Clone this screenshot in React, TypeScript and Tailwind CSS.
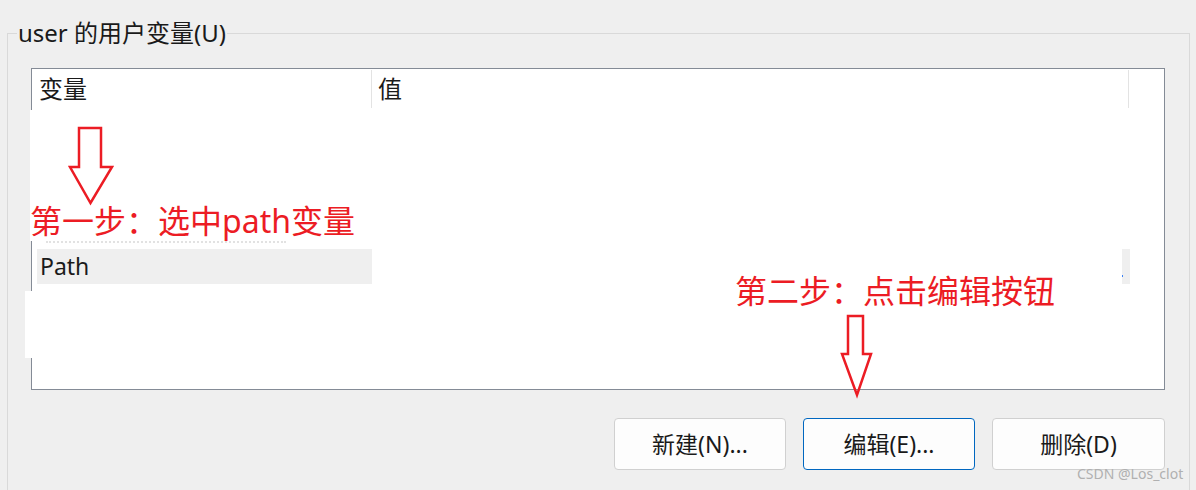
const uiFont = { fontFamily: '"Noto Sans", "Noto Sans CJK SC", sans-serif' }

function ArrowDown({ className, points }: { className: string; points: string }) {
  return (
    <svg className={className} fill="none">
      <polygon points={points} stroke="#ec1c24" strokeWidth={2.5} strokeLinejoin="miter" />
    </svg>
  )
}

export default function App() {
  return (
    <div className="relative w-[1196px] h-[490px] overflow-hidden bg-[#efefef] text-[#1a1a1a]" style={uiFont}>
      <fieldset className="mt-[19px] ml-[7px] mr-[6px] h-[520px] border border-[#d9d9d9]">
        <legend className="ml-[9px] px-[1px] text-[24px] leading-[28px]">user 的用户变量(U)</legend>

        <div className="relative ml-[23px] mt-[21px] w-[1134px] h-[322px] border border-[#848b96] bg-white">
          <div className="flex h-[40px] text-[24px]">
            <div className="w-[339px] pl-[7px] flex items-center">变量</div>
            <div className="w-px mt-[1px] h-[38px] bg-[#e3e3e3]" />
            <div className="flex-1 pl-[6px] flex items-center">值</div>
            <div className="w-px mt-[1px] h-[38px] bg-[#e3e3e3]" />
            <div className="w-[35px]" />
          </div>

          <div className="mt-[140px] flex h-[35px] text-[23px]">
            <div className="ml-[5px] w-[335px] bg-[#efefef] pl-[3px] flex items-center">Path</div>
            <div className="flex-1" />
            <div className="relative w-[8px] bg-[#efefef]">
              <div className="absolute left-0 top-[26px] w-px h-[2px] bg-[#3b82f6]" />
            </div>
            <div className="w-[34px]" />
          </div>

          {/* white patches from the pasted annotation */}
          <div className="absolute left-[-2px] top-[41px] w-[400px] h-[131px] bg-white" />
          <div className="absolute left-[-7px] top-[222px] w-[400px] h-[67px] bg-white" />
          <div className="absolute left-[14px] top-[172px] w-[240px] border-t-2 border-dotted border-[#e2e2e2]" />
        </div>

        <div className="mt-[28px] mr-[24px] flex justify-end gap-[17px] text-[23px]">
          <button className="w-[172px] h-[52px] rounded-[4px] border border-[#d0d0d0] bg-[#fdfdfd]">新建(N)...</button>
          <button className="w-[172px] h-[52px] rounded-[4px] border border-[#0067c0] bg-[#fdfdfd]">编辑(E)...</button>
          <button className="w-[173px] h-[52px] rounded-[4px] border border-[#d0d0d0] bg-[#fdfdfd]">删除(D)</button>
        </div>
      </fieldset>

      <ArrowDown className="absolute left-[66px] top-[124px] w-[50px] h-[84px]" points="13,4 35,4 35,43 46,43 24.5,79 4,43 13,43" />
      <div className="absolute left-[30px] top-[203px] text-[32px] leading-[36px] text-[#ec1c24] whitespace-nowrap">第一步：选中path变量</div>

      <div className="absolute left-[735px] top-[273px] text-[32px] leading-[36px] text-[#ec1c24] whitespace-nowrap">第二步：点击编辑按钮</div>
      <ArrowDown className="absolute left-[838px] top-[312px] w-[38px] h-[88px]" points="10,4 25,4 25,42 33,42 19,83 4,42 10,42" />

      <div className="absolute left-[1077px] top-[465px] text-[14px] leading-[18px] text-[#b0b0b0] whitespace-nowrap">CSDN @Los_clot</div>
    </div>
  )
}
